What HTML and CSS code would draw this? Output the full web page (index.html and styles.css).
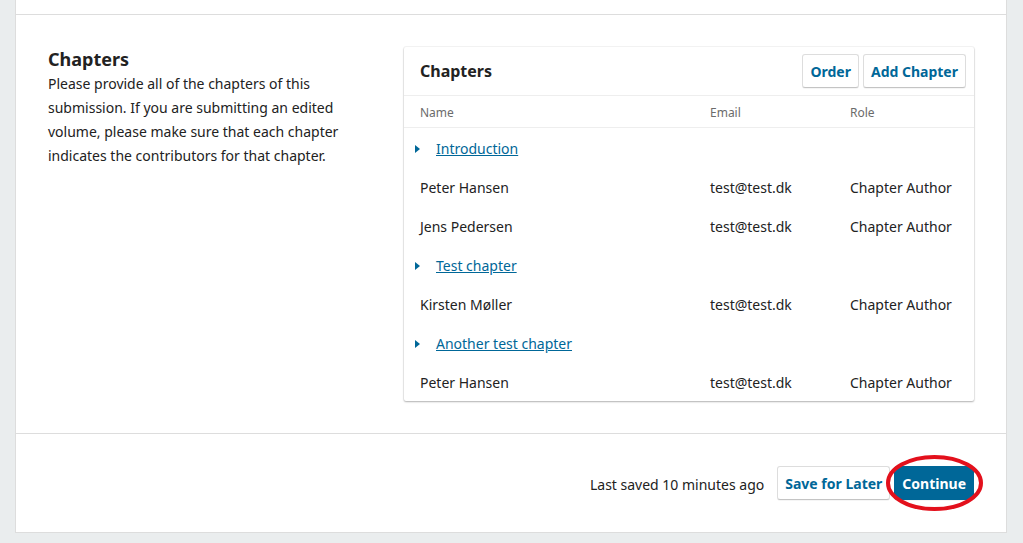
FILE: index.html
```html
<!DOCTYPE html>
<html lang="en">
<head>
<meta charset="utf-8">
<title>Chapters</title>
<link rel="stylesheet" href="styles.css">
</head>
<body>
<div class="page">
  <div class="card">
    <div class="card__prev"></div>
    <div class="section">
      <div class="section__intro">
        <h2 class="section__title">Chapters</h2>
        <p class="section__desc">Please provide all of the chapters of this submission. If you are submitting an edited volume, please make sure that each chapter indicates the contributors for that chapter.</p>
      </div>
      <div class="panel">
        <div class="panel__header">
          <h3 class="panel__title">Chapters</h3>
          <div class="panel__actions">
            <button class="btn">Order</button>
            <button class="btn">Add Chapter</button>
          </div>
        </div>
        <div class="grid-row grid-row--head">
          <span>Name</span><span>Email</span><span>Role</span>
        </div>
        <div class="chapter-row"><span class="caret"></span><a class="chapter-link" href="#">Introduction</a></div>
        <div class="grid-row"><span>Peter Hansen</span><span>test@test.dk</span><span>Chapter Author</span></div>
        <div class="grid-row"><span>Jens Pedersen</span><span>test@test.dk</span><span>Chapter Author</span></div>
        <div class="chapter-row"><span class="caret"></span><a class="chapter-link" href="#">Test chapter</a></div>
        <div class="grid-row"><span>Kirsten Møller</span><span>test@test.dk</span><span>Chapter Author</span></div>
        <div class="chapter-row"><span class="caret"></span><a class="chapter-link" href="#">Another test chapter</a></div>
        <div class="grid-row"><span>Peter Hansen</span><span>test@test.dk</span><span>Chapter Author</span></div>
      </div>
    </div>
    <div class="footer">
      <span class="footer__saved">Last saved 10 minutes ago</span>
      <button class="btn">Save for Later</button>
      <span class="highlight">
        <button class="btn btn--primary">Continue</button>
        <svg class="highlight__ring" width="101" height="60" viewBox="0 0 101 60" aria-hidden="true">
          <ellipse cx="50.5" cy="30" rx="46.5" ry="26" fill="none" stroke="#e3101c" stroke-width="4"/>
        </svg>
      </span>
    </div>
  </div>
</div>
</body>
</html>
```

FILE: styles.css
```css
* { box-sizing: border-box; }

html, body {
  margin: 0;
  padding: 0;
}

body {
  background: #eaedee;
  font-family: "Noto Sans", "Open Sans", sans-serif;
  font-size: 14px;
  color: #222;
  overflow: hidden;
}

.page {
  padding: 0 16px 0 15px;
}

.card {
  background: #fff;
  border: 1px solid #dddddd;
  border-top: none;
}

.card__prev {
  height: 15px;
  border-bottom: 1px solid #dddddd;
}

.section {
  display: grid;
  grid-template-columns: 340px 570px;
  column-gap: 16px;
  padding: 32px;
}

.section__title {
  margin: 0;
  font-size: 18px;
  line-height: 24px;
  font-weight: 700;
}

.section__desc {
  margin: 1px 0 0;
  font-size: 14px;
  line-height: 24px;
}

.panel {
  background: #fff;
  border-radius: 2px;
  box-shadow: 0 0 0 1px rgba(0, 0, 0, 0.04), 0 1px 2px rgba(0, 0, 0, 0.28);
}

.panel__header {
  display: flex;
  align-items: center;
  justify-content: space-between;
  padding: 7px 8px 7px 16px;
  border-bottom: 1px solid #eeeeee;
}

.panel__title {
  margin: 0;
  font-size: 16px;
  font-weight: 700;
  line-height: 24px;
}

.panel__actions {
  display: flex;
  gap: 4px;
}

.btn {
  height: 34px;
  padding: 2px 7px 0;
  font-family: inherit;
  font-size: 14px;
  font-weight: 700;
  line-height: 30px;
  color: #006798;
  background: #fff;
  border: 1px solid #dddddd;
  border-bottom-color: #c4c4c4;
  border-radius: 3px;
  box-shadow: 0 1px 0 rgba(0, 0, 0, 0.04);
}

.btn--primary {
  color: #fff;
  background: #006798;
  border-color: #006798;
}

.grid-row {
  display: grid;
  grid-template-columns: 290px 140px 1fr;
  align-items: center;
  height: 39px;
  padding: 2px 16px 0;
  font-size: 14px;
}

.grid-row--head {
  height: 32px;
  font-size: 12px;
  color: #6b6b6b;
  border-bottom: 1px solid #eeeeee;
}

.chapter-row {
  display: flex;
  align-items: center;
  height: 39px;
  padding: 2px 0 0 11px;
}

.caret {
  width: 0;
  height: 0;
  border-left: 5px solid #006798;
  border-top: 4px solid transparent;
  border-bottom: 4px solid transparent;
  margin-right: 16px;
}

.chapter-link {
  color: #006798;
  text-decoration: underline;
  font-size: 14px;
}

.footer {
  display: flex;
  align-items: center;
  justify-content: flex-end;
  gap: 4px;
  padding: 32px;
  border-top: 1px solid #dddddd;
}

.footer__saved {
  margin-right: 9px;
  padding-top: 2px;
}

.highlight {
  position: relative;
  display: inline-flex;
}

.highlight__ring {
  position: absolute;
  left: -10px;
  top: -13px;
  pointer-events: none;
}
```
